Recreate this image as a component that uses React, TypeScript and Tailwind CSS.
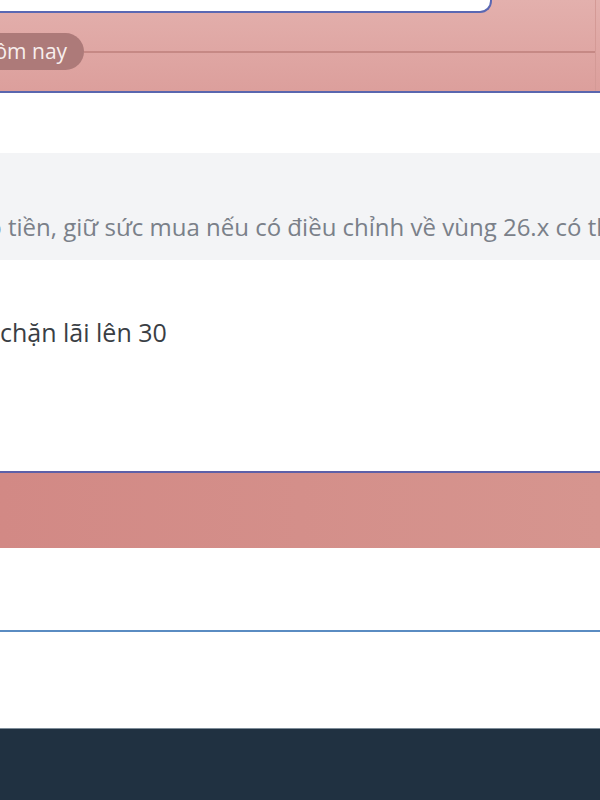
import React from 'react';

export default function App() {
  return (
    <div
      className="w-[600px] h-[800px] overflow-hidden bg-white flex flex-col"
      style={{ fontFamily: '"Open Sans", "Noto Sans", sans-serif' }}
    >
      {/* Day header band */}
      <div className="h-[93px] shrink-0 bg-gradient-to-b from-[#e3b0ad] to-[#dc9f9c] border-b-2 border-[#5a66ae] flex">
        <div className="flex-1 flex flex-col">
          <div className="h-[13px] w-[492px] bg-white border-b-2 border-r-2 border-[#5a68b3] rounded-br-[12px]" />
          <div className="mt-[20px] flex items-center overflow-hidden">
            <span className="-ml-[37px] shrink-0 rounded-full bg-[#ad7a79] h-[37px] pl-[16px] pr-[17px] flex items-center text-[21px] font-medium text-[#f8eeed] whitespace-nowrap">
              Hôm nay
            </span>
            <div className="flex-1 h-[2px] bg-[#c68985]" />
          </div>
        </div>
        <div className="w-[1px] bg-[#d49a96] mr-[4px]" />
      </div>

      <div className="h-[60px] shrink-0" />

      {/* Note box */}
      <div className="h-[107px] shrink-0 bg-[#f3f4f6] overflow-hidden flex items-end pb-[17px]">
        <p className="-ml-[38px] whitespace-nowrap text-[24px] leading-[32px] text-[#7a8089]">
          vào tiền, giữ sức mua nếu có điều chỉnh về vùng 26.x có thể mua thêm
        </p>
      </div>

      <div className="h-[55px] shrink-0" />
      <div className="overflow-hidden">
        <p className="whitespace-nowrap text-[25px] leading-[34px] text-[#3a3e44]">chặn lãi lên 30</p>
      </div>

      <div className="h-[122px] shrink-0" />

      {/* Next day band */}
      <div className="h-[77px] shrink-0 border-t-2 border-[#5d60a8] bg-gradient-to-r from-[#d28985] to-[#d6958f]" />

      <div className="h-[84px] shrink-0 border-b-2 border-[#5a8cc2]" />

      <div className="flex-1" />

      {/* Footer */}
      <div className="h-[72px] shrink-0 bg-[#203141] border-t border-[#7e8d99]" />
    </div>
  );
}
